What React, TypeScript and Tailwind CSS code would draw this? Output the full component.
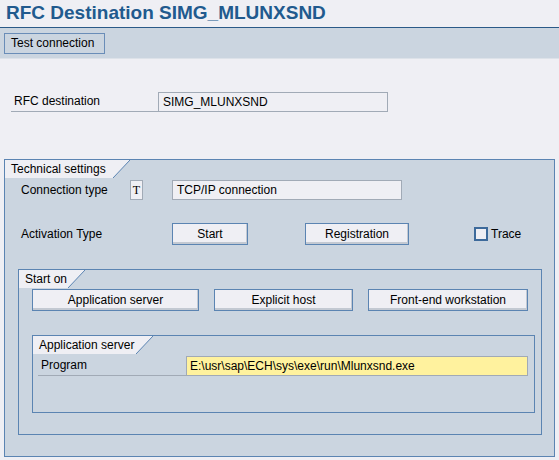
import React from "react";

const btn =
  "h-[22px] flex items-center justify-center bg-[#efeff4] border border-[#5b84b2] shadow-[inset_-1px_-2px_0_#c3c9d2] text-[12px] text-black";

function Tab({ label, w }: { label: string; w: number }) {
  return (
    <div className="flex h-[18px]">
      <div
        className="h-[18px] bg-[#efeff4] pl-[6px] text-[12px] leading-[18px] text-black"
        style={{ width: w }}
      >
        {label}
      </div>
      <svg width="17" height="18" viewBox="0 0 17 18" className="block">
        <polygon points="0,0 17,0 0,18" fill="#efeff4" />
        <line x1="0" y1="18" x2="17" y2="0" stroke="#5b84b2" strokeWidth="1" />
      </svg>
    </div>
  );
}

export default function App() {
  return (
    <div className="w-[559px] h-[460px] bg-[#efeff4] font-['Liberation_Sans',Arial,sans-serif] text-[12px] text-black overflow-hidden">
      {/* title */}
      <div className="h-[28px] border-b border-[#2b5a88] pl-[6px] text-[19px] leading-[25px] font-bold text-[#215a8e]">
        RFC Destination SIMG_MLUNXSND
      </div>

      {/* toolbar */}
      <div className="h-[31px] bg-[#cbd5e0] border-b border-[#dde2e9] pt-[5px] pl-[4px]">
        <div className="w-[101px] h-[21px] border border-[#6a8db8] bg-[#cbd5e0] pl-[6px] leading-[19px]">
          Test connection
        </div>
      </div>

      {/* rfc destination */}
      <div className="mt-[32px] ml-[11px] flex items-end">
        <div className="w-[147px] border-b border-[#a1aab6] pl-[3px] leading-[20px]">RFC destination</div>
        <div className="w-[230px] h-[20px] border border-[#a1aab6] bg-[#efeff4] pl-[4px] leading-[18px]">
          SIMG_MLUNXSND
        </div>
      </div>

      {/* technical settings */}
      <div className="mt-[47px] ml-[4px] w-[551px] h-[298px] border border-[#5b84b2] bg-[#cbd5e0]">
        <Tab label="Technical settings" w={108} />

        <div className="mt-[2px] flex items-center h-[20px]">
          <div className="w-[125px] pl-[16px]">Connection type</div>
          <div className="w-[13px] h-[20px] border border-[#a1aab6] bg-[#efeff4] flex items-center justify-center font-['Liberation_Serif',serif] text-[12px]">
            T
          </div>
          <div className="ml-[29px] w-[230px] h-[20px] border border-[#a1aab6] bg-[#efeff4] pl-[4px] leading-[18px]">
            TCP/IP connection
          </div>
        </div>

        <div className="mt-[23px] flex items-center h-[22px]">
          <div className="w-[167px] pl-[16px]">Activation Type</div>
          <div className={`${btn} w-[76px]`}>Start</div>
          <div className={`${btn} ml-[57px] w-[104px]`}>Registration</div>
          <div className="ml-[65px] w-[14px] h-[14px] border-2 border-[#3d6a9b] bg-[#efeff4]" />
          <div className="ml-[3px]">Trace</div>
        </div>

        {/* start on */}
        <div className="mt-[24px] ml-[13px] w-[524px] h-[166px] border border-[#5b84b2]">
          <Tab label="Start on" w={49} />
          <div className="mt-[1px] ml-[13px] flex gap-[15px]">
            <div className={`${btn} w-[167px]`}>Application server</div>
            <div className={`${btn} w-[139px]`}>Explicit host</div>
            <div className={`${btn} w-[160px]`}>Front-end workstation</div>
          </div>

          {/* application server */}
          <div className="mt-[24px] ml-[13px] w-[503px] h-[78px] border border-[#5b84b2]">
            <Tab label="Application server" w={103} />
            <div className="mt-[1px] ml-[5px] flex items-end">
              <div className="w-[148px] border-b border-[#a1aab6] pl-[3px] leading-[20px]">Program</div>
              <div className="w-[342px] h-[20px] border border-[#a1aab6] bg-[#fff29e] pl-[3px] leading-[18px]">
                E:\usr\sap\ECH\sys\exe\run\Mlunxsnd.exe
              </div>
            </div>
          </div>
        </div>
      </div>
    </div>
  );
}
